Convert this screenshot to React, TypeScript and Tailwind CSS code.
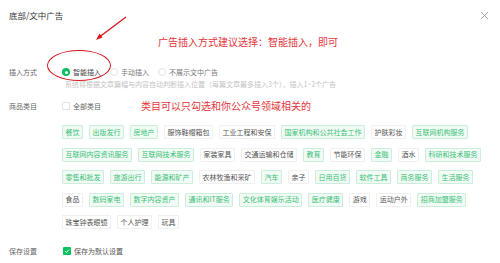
const tagRows: [string, boolean][][] = [
  [
    ["餐饮", true],
    ["出版发行", true],
    ["房地产", true],
    ["服饰鞋帽箱包", false],
    ["工业工程和安保", false],
    ["国家机构和公共社会工作", true],
    ["护肤彩妆", false],
    ["互联网机构服务", true],
  ],
  [
    ["互联网内容资讯服务", true],
    ["互联网技术服务", true],
    ["家装家具", false],
    ["交通运输和仓储", false],
    ["教育", true],
    ["节能环保", false],
    ["金融", true],
    ["酒水", false],
    ["科研和技术服务", true],
  ],
  [
    ["零售和批发", true],
    ["旅游出行", true],
    ["能源和矿产", true],
    ["农林牧渔和采矿", false],
    ["汽车", true],
    ["亲子", false],
    ["日用百货", true],
    ["软件工具", true],
    ["商务服务", true],
    ["生活服务", true],
  ],
  [
    ["食品", false],
    ["数码家电", true],
    ["数字内容资产", true],
    ["通讯和IT服务", true],
    ["文化体育娱乐活动", true],
    ["医疗健康", true],
    ["游戏", false],
    ["运动户外", false],
    ["招商加盟服务", true],
  ],
  [
    ["珠宝钟表眼镜", false],
    ["个人护理", false],
    ["玩具", false],
  ],
];

function Tag({ label, on }: { label: string; on: boolean }) {
  return (
    <span
      className={
        on
          ? "h-[14px] flex items-center px-[2.5px] border border-[#cdeedb] bg-[#f1fbf5] text-[#3bbf77] rounded-[1px]"
          : "h-[14px] flex items-center px-[2.5px] border border-[#f0f0f0] bg-white text-[#555] rounded-[1px]"
      }
    >
      {label}
    </span>
  );
}

function Radio({ checked, label }: { checked?: boolean; label: string }) {
  return (
    <div className="flex items-center gap-[3px]">
      {checked ? (
        <span className="w-[8px] h-[8px] rounded-full bg-[#07c160] flex items-center justify-center">
          <span className="w-[3px] h-[3px] rounded-full bg-white" />
        </span>
      ) : (
        <span className="w-[8px] h-[8px] rounded-full border border-[#e3e3e3] bg-white" />
      )}
      <span className={checked ? "text-[#444]" : "text-[#777]"}>{label}</span>
    </div>
  );
}

export default function App() {
  return (
    <div
      className="relative w-[500px] h-[263px] bg-white overflow-hidden px-[9px] text-[7px] leading-[7px]"
      style={{ fontFamily: '"Noto Sans CJK SC", "Noto Sans", sans-serif' }}
    >
      {/* header */}
      <div className="h-[30px] flex items-center justify-between pr-[1px]">
        <span className="text-[8.5px] text-[#333]">底部/文中广告</span>
        <svg width="9" height="9" viewBox="0 0 9 9" className="mr-[1px]">
          <path d="M1 1 L8 8 M8 1 L1 8" stroke="#9a9a9a" strokeWidth="0.9" />
        </svg>
      </div>

      {/* annotation */}
      <div className="h-[24px] flex items-center pl-[149px]">
        <span className="text-[10px] leading-[10px] text-[#e5343a]">
          广告插入方式建议选择：智能插入，即可
        </span>
      </div>

      {/* insert mode */}
      <div className="mt-[12px] h-[12px] flex items-center">
        <span className="w-[53px] text-[#666]">插入方式</span>
        <div className="flex items-center gap-[9px]">
          <Radio checked label="智能插入" />
          <Radio label="手动插入" />
          <Radio label="不展示文中广告" />
        </div>
      </div>
      <div className="h-[12px] flex items-center pl-[56px] text-[#c4c4c4]">
        系统将根据文章篇幅与内容自动判断插入位置（每篇文章最多插入3个），插入1~2个广告
      </div>

      {/* category */}
      <div className="mt-[9px] h-[14px] flex items-center">
        <span className="w-[53px] text-[#666]">商品类目</span>
        <div className="flex items-center gap-[3px]">
          <span className="w-[8px] h-[8px] border border-[#e3e3e3] rounded-[1px] bg-white" />
          <span className="text-[#666]">全部类目</span>
        </div>
        <span className="ml-[40px] text-[10px] leading-[10px] text-[#e5343a]">
          类目可以只勾选和你公众号领域相关的
        </span>
      </div>

      <div className="mt-[12px] pl-[53px] flex flex-col gap-y-[8.5px]">
        {tagRows.map((row, i) => (
          <div key={i} className="flex gap-[6px]">
            {row.map(([label, on]) => (
              <Tag key={label} label={label} on={on} />
            ))}
          </div>
        ))}
      </div>

      {/* save */}
      <div className="mt-[15px] h-[14px] flex items-center">
        <span className="w-[54px] text-[#666]">保存设置</span>
        <div className="flex items-center gap-[3px]">
          <span className="w-[8px] h-[8px] rounded-[1px] bg-[#07c160] flex items-center justify-center">
            <svg width="6" height="6" viewBox="0 0 6 6">
              <path d="M1 3.1 L2.4 4.5 L5 1.6" stroke="#fff" strokeWidth="1" fill="none" />
            </svg>
          </span>
          <span className="text-[#555]">保存为默认设置</span>
        </div>
      </div>

      {/* annotation overlays */}
      <div className="absolute left-[47px] top-[50px] w-[64px] h-[31px] rounded-[50%] border-[1.5px] border-[#d9161c]" />
      <svg className="absolute left-0 top-0" width="140" height="50" viewBox="0 0 140 50">
        <path d="M126 17 L98 38" stroke="#d9161c" strokeWidth="1.3" />
        <path d="M96 40 L99.5 33.5 L102.5 37.5 Z" fill="#d9161c" />
      </svg>
    </div>
  );
}
